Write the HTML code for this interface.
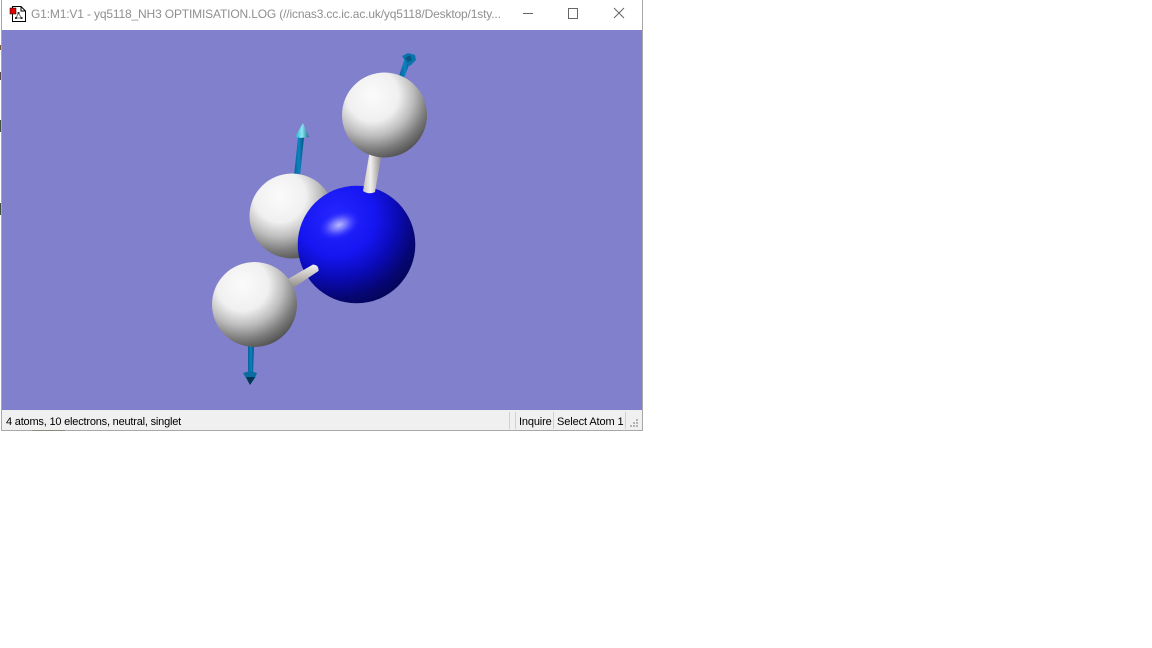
<!DOCTYPE html>
<html><head><meta charset="utf-8"><style>
html,body{margin:0;padding:0;background:#fff;width:1152px;height:648px;overflow:hidden}
body{position:relative;font-family:"Liberation Sans",sans-serif}
.a{position:absolute}
.t{white-space:nowrap}
</style></head><body>
<div class="a" style="left:1px;top:0;width:642px;height:431px;background:#fff"></div>
<div class="a" style="left:1px;top:0;width:1px;height:431px;background:#a8a8a8"></div>
<div class="a" style="left:642px;top:0;width:1px;height:431px;background:#a8a8a8"></div>
<div class="a" style="left:0;top:45px;width:1px;height:5px;background:#7a5a30"></div>
<div class="a" style="left:0;top:72px;width:1px;height:8px;background:#5a4a50"></div>
<div class="a" style="left:0;top:120px;width:1px;height:12px;background:#44503f"></div>
<div class="a" style="left:0;top:203px;width:1px;height:12px;background:#44503f"></div>

<svg class="a" style="left:9px;top:5px" width="18" height="18" viewBox="0 0 18 18">
<path d="M3.500 1.500H12L16.500 6V16.500H3.500Z" fill="#fff" stroke="#000"/>
<path d="M12 1.500V6H16.500" fill="none" stroke="#000"/>
<path d="M9.500 8L7 13M9.500 8L12.500 13M7 13H12.500" stroke="#777" fill="none"/>
<rect x="8.500" y="7" width="2" height="2" fill="#333"/><rect x="6" y="12" width="2" height="2" fill="#333"/><rect x="11.500" y="12" width="2" height="2" fill="#333"/>
<rect x="1" y="3" width="6" height="6" fill="#e00000" stroke="#000" stroke-width=".5"/>
</svg>
<div class="a t" style="left:31px;top:6px;font-size:12px;line-height:16px;letter-spacing:-.155px;color:#8f8f8f">G1:M1:V1 - yq5118_NH3 OPTIMISATION.LOG (//icnas3.cc.ic.ac.uk/yq5118/Desktop/1sty...</div>
<svg class="a" style="left:515px;top:0" width="120" height="28" viewBox="0 0 120 28" fill="none" stroke="#666">
<path d="M8 13.500H18"/>
<rect x="53.500" y="8.500" width="9" height="10"/>
<path d="M99 8L109 18M109 8L99 18"/>
</svg>

<svg class="a" style="left:2px;top:30px" width="640" height="380" viewBox="2 30 640 380">
<defs>
<radialGradient id="w" gradientUnits="objectBoundingBox" cx=".36" cy=".27" r=".8">
<stop offset="0" stop-color="#fbfbfb"/><stop offset=".38" stop-color="#f0f0f0"/><stop offset=".6" stop-color="#bcbcbc"/><stop offset=".8" stop-color="#7c7c7c"/><stop offset="1" stop-color="#484848"/>
</radialGradient>
<radialGradient id="b" gradientUnits="objectBoundingBox" cx=".33" cy=".27" r=".85">
<stop offset="0" stop-color="#2626ff"/><stop offset=".38" stop-color="#1616f2"/><stop offset=".6" stop-color="#0b0bb8"/><stop offset=".8" stop-color="#060674"/><stop offset="1" stop-color="#040448"/>
</radialGradient>
<radialGradient id="s"><stop offset="0" stop-color="#b8b8ff"/><stop offset=".4" stop-color="#6a6aff"/><stop offset="1" stop-color="#2222ff" stop-opacity="0"/></radialGradient>
<linearGradient id="c1" x1="0" x2="1" y1="0" y2="0"><stop offset="0" stop-color="#0a5f95"/><stop offset=".5" stop-color="#0a84c4"/><stop offset="1" stop-color="#075078"/></linearGradient>
<linearGradient id="cone" x1="0" x2="1" y1="0" y2="0"><stop offset="0" stop-color="#2aa8c8"/><stop offset=".5" stop-color="#8ae8f4"/><stop offset="1" stop-color="#1a6a88"/></linearGradient>
<linearGradient id="bond" x1="0" x2="1" y1="0" y2="0"><stop offset="0" stop-color="#c8c4c0"/><stop offset=".4" stop-color="#f2f0ee"/><stop offset="1" stop-color="#8a8684"/></linearGradient>
<linearGradient id="bond2" x1="0" x2="0" y1="0" y2="1"><stop offset="0" stop-color="#f4f2f0"/><stop offset="1" stop-color="#8f8b88"/></linearGradient>
</defs>
<rect x="2" y="30" width="640" height="380" fill="#8080cc"/>

<path d="M399 76L405 58L411 60L404 78Z" fill="url(#c1)"/>
<path d="M402 56L408 53L415 55L416 60L410 66L407 64Z" fill="#0a74ae"/>
<path d="M405 58L410 55L412 60L408 62Z" fill="#0a557f"/>
<path d="M294 176L298 137L304 137L300 176Z" fill="url(#c1)"/>
<path d="M303 123L295 137L301 138L309 137Z" fill="url(#cone)"/>
<path d="M248 345L254 345L253 375L248 375Z" fill="url(#c1)"/>
<path d="M243 373L250 371L257 373L255 378L250 385L246 378Z" fill="#0a6ca0"/>
<path d="M246 377L255 377L250 385Z" fill="#06344f"/>

<circle cx="292" cy="216" r="42.500" fill="url(#w)"/>
<circle cx="356.500" cy="244.500" r="58.800" fill="url(#b)"/>
<ellipse cx="339" cy="225" rx="22" ry="14" transform="rotate(-20 339 225)" fill="url(#s)"/>

<path d="M370 150L382 152L375 192Q369 195 363 191Z" fill="url(#bond)"/>
<path d="M288 279L313 264.500Q319 265 318.500 271L293 288Z" fill="url(#bond2)"/>

<circle cx="384.500" cy="115" r="42.500" fill="url(#w)"/>
<circle cx="254.500" cy="304.500" r="42.500" fill="url(#w)"/>
</svg>

<div class="a" style="left:2px;top:410px;width:640px;height:20px;background:#f0f0f0"></div>
<div class="a" style="left:2px;top:430px;width:641px;height:1px;background:#a8a8a8"></div>
<div class="a" style="left:32px;top:430px;width:33px;height:1px;background:#8a8a7a"></div>
<div class="a t" style="left:6px;top:414px;font-size:11px;line-height:16px;letter-spacing:-.2px;color:#000">4 atoms, 10 electrons, neutral, singlet</div>
<div class="a" style="left:509px;top:412px;width:1px;height:17px;background:#d0d0d0"></div>
<div class="a" style="left:515px;top:412px;width:1px;height:17px;background:#d0d0d0"></div>
<div class="a t" style="left:519px;top:414px;font-size:11px;line-height:16px;letter-spacing:-.15px;color:#000">Inquire</div>
<div class="a" style="left:553px;top:412px;width:1px;height:17px;background:#d0d0d0"></div>
<div class="a t" style="left:557px;top:414px;font-size:11px;line-height:16px;letter-spacing:-.1px;color:#000">Select Atom 1</div>
<div class="a" style="left:625px;top:412px;width:1px;height:17px;background:#d0d0d0"></div>
<svg class="a" style="left:628px;top:418px" width="12" height="11" fill="#b4b4b4">
<rect x="8" y="1" width="2" height="2"/><rect x="5" y="4" width="2" height="2"/><rect x="8" y="4" width="2" height="2"/><rect x="2" y="7" width="2" height="2"/><rect x="5" y="7" width="2" height="2"/><rect x="8" y="7" width="2" height="2"/>
</svg>
</body></html>
